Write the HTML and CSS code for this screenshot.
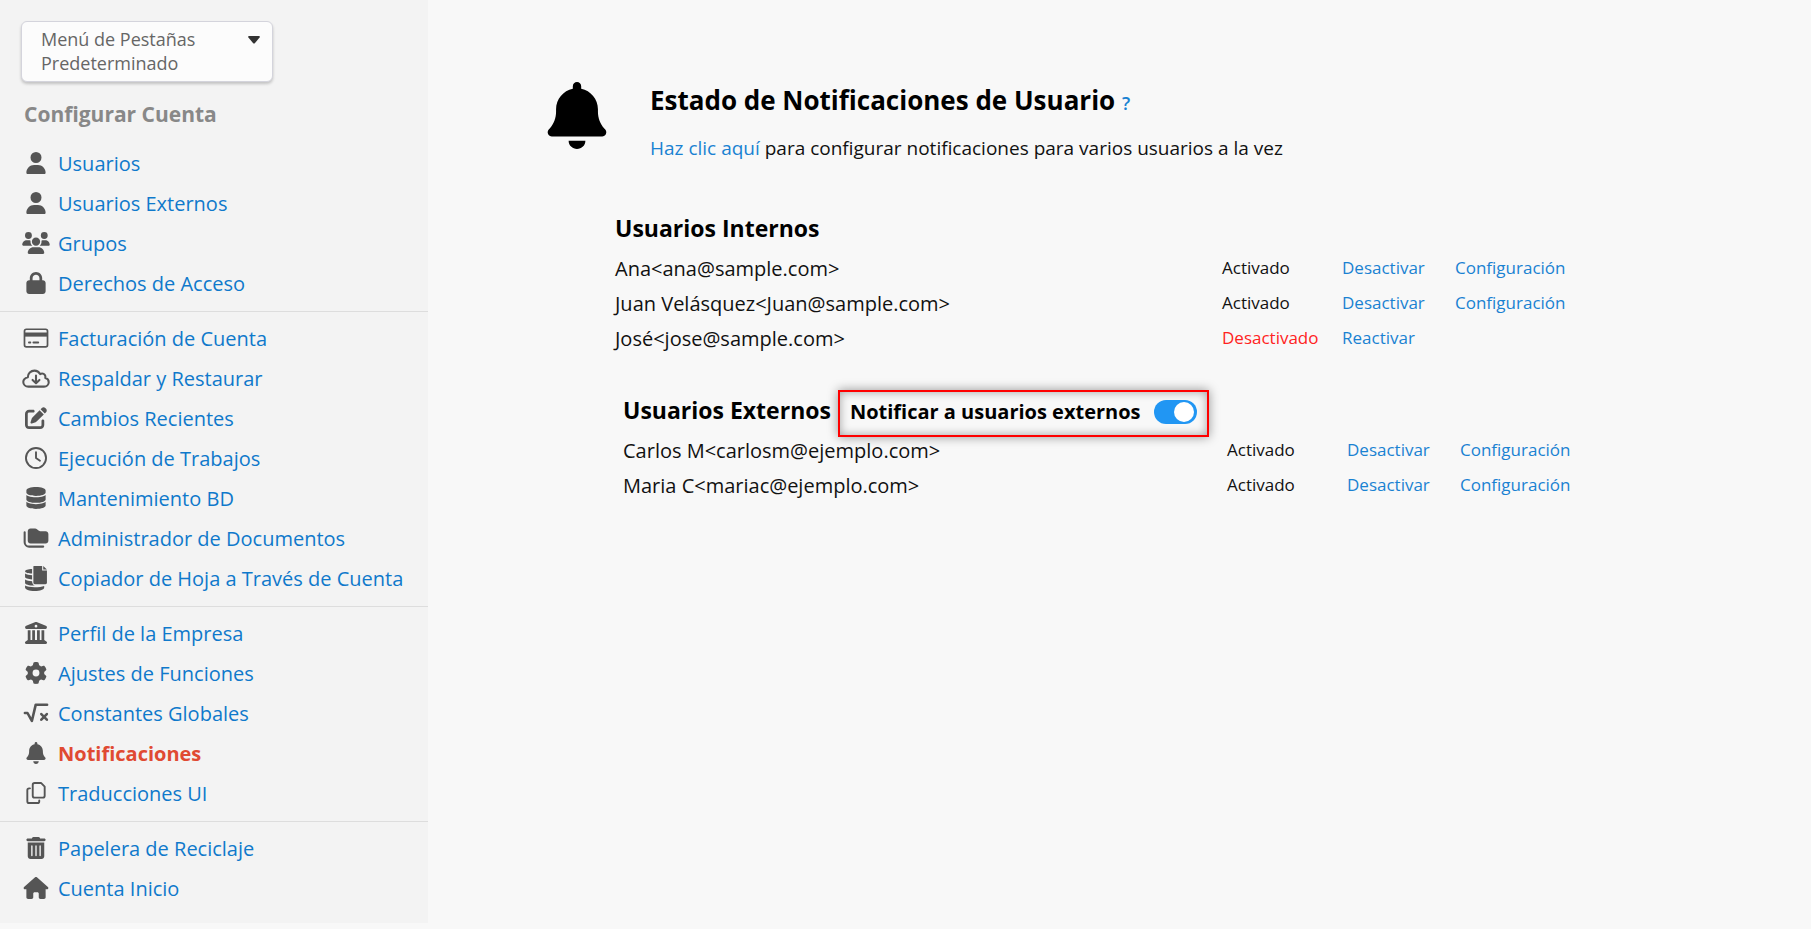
FILE: index.html
```
<!DOCTYPE html>
<html lang="es">
  <head>
    <meta charset="UTF-8" />
    <meta name="viewport" content="width=device-width, initial-scale=1.0" />
    <title>Notificaciones</title>
    <link rel="stylesheet" href="styles.css">
  </head>
  <body>
    <svg class="sprite" aria-hidden="true">
      <symbol id="i-user" viewBox="0 0 448 512"><path d="M224 256A128 128 0 1 0 224 0a128 128 0 1 0 0 256zm-45.700 48C79.800 304 0 383.800 0 482.300C0 498.700 13.300 512 29.700 512H418.300c16.400 0 29.700-13.300 29.700-29.700C448 383.800 368.200 304 269.700 304H178.300z"/></symbol>
      <symbol id="i-groups" viewBox="0 0 640 512"><path d="M144 0a80 80 0 1 1 0 160A80 80 0 1 1 144 0zM512 0a80 80 0 1 1 0 160A80 80 0 1 1 512 0zM0 298.700C0 239.800 47.800 192 106.700 192h42.700c15.900 0 31 3.500 44.600 9.700c-1.300 7.200-1.900 14.700-1.900 22.300c0 38.200 16.800 72.500 43.300 96H21.300C9.600 320 0 310.400 0 298.700zM405.300 320c26.600-23.500 43.300-57.800 43.300-96c0-7.600-.7-15-1.900-22.300c13.600-6.300 28.700-9.700 44.600-9.700h42.700C592.200 192 640 239.800 640 298.700c0 11.800-9.600 21.300-21.300 21.300H405.300zM224 224a96 96 0 1 1 192 0 96 96 0 1 1-192 0zM128 485.300C128 411.700 187.700 352 261.300 352H378.700C452.300 352 512 411.700 512 485.300c0 14.700-11.900 26.700-26.700 26.700H154.700c-14.700 0-26.700-11.900-26.700-26.700z"/></symbol>
      <symbol id="i-lock" viewBox="0 0 448 512"><path d="M144 144v48H304V144c0-44.200-35.800-80-80-80s-80 35.800-80 80zM80 192V144C80 64.500 144.500 0 224 0s144 64.500 144 144v48h16c35.300 0 64 28.700 64 64V448c0 35.300-28.700 64-64 64H64c-35.300 0-64-28.700-64-64V256c0-35.300 28.700-64 64-64H80z"/></symbol>
      <symbol id="i-card" viewBox="0 0 576 512"><rect x="20" y="52" width="536" height="408" rx="44" fill="none" stroke="currentColor" stroke-width="40"/><path d="M20 128h536v96H20z"/><path d="M124 360h32M228 360h112" fill="none" stroke="currentColor" stroke-width="44" stroke-linecap="round"/></symbol>
      <symbol id="i-cloud" viewBox="0 0 640 512"><path d="M144 456h364c62 0 108-44 108-102c0-50-34-90-80-100c14-50-20-102-74-102c-18 0-32 4-46 12c-28-50-76-80-132-80c-86 0-154 68-154 152c-62 16-106 56-106 112c0 62 52 108 120 108z" fill="none" stroke="currentColor" stroke-width="48" stroke-linejoin="round"/><path d="M320 200v172M240 300l80 78 80-78" fill="none" stroke="currentColor" stroke-width="48" stroke-linecap="round" stroke-linejoin="round"/></symbol>
      <symbol id="i-edit" viewBox="0 0 512 512"><path d="M471.600 21.700c-21.900-21.900-57.300-21.900-79.200 0L362.300 51.700l97.900 97.900 30.100-30.100c21.900-21.900 21.900-57.300 0-79.200L471.600 21.700zm-299.200 220c-6.100 6.100-10.800 13.600-13.500 21.900l-29.600 88.800c-2.900 8.600-.6 18.100 5.800 24.600s15.900 8.700 24.600 5.800l88.800-29.600c8.200-2.700 15.700-7.400 21.900-13.500L437.700 172.300 339.700 74.300 172.400 241.700zM96 64C43 64 0 107 0 160V416c0 53 43 96 96 96H352c53 0 96-43 96-96V320c0-17.700-14.300-32-32-32s-32 14.300-32 32v96c0 17.700-14.300 32-32 32H96c-17.700 0-32-14.300-32-32V160c0-17.700 14.300-32 32-32h96c17.700 0 32-14.300 32-32s-14.300-32-32-32H96z"/></symbol>
      <symbol id="i-clock" viewBox="0 0 512 512"><g fill="none" stroke="currentColor" stroke-width="44" stroke-linecap="round" stroke-linejoin="round"><circle cx="256" cy="256" r="234"/><path d="M256 120v136l92 62"/></g></symbol>
      <symbol id="i-database" viewBox="0 0 448 512"><path d="M448 80v48c0 44.200-100.300 80-224 80S0 172.200 0 128V80C0 35.800 100.300 0 224 0S448 35.800 448 80zM393.200 214.700c20.800-7.400 39.900-16.900 54.800-28.600V288c0 44.200-100.300 80-224 80S0 332.200 0 288V186.100c14.900 11.800 34 21.200 54.800 28.600C99.700 230.700 159.500 240 224 240s124.300-9.300 169.200-25.300zM0 346.100c14.900 11.800 34 21.200 54.800 28.600C99.700 390.700 159.500 400 224 400s124.300-9.300 169.200-25.300c20.800-7.400 39.900-16.900 54.800-28.600V432c0 44.200-100.300 80-224 80S0 476.200 0 432V346.100z"/></symbol>
      <symbol id="i-folders" viewBox="0 0 576 512"><path d="M96 96c0-35 29-64 64-64h106c17 0 33 7 45 19l27 26c12 12 28 19 45 19h129c35 0 64 29 64 64v160c0 35-29 64-64 64H160c-35 0-64-29-64-64V96z"/><path d="M24 120v232c0 57 47 104 104 104h328" fill="none" stroke="currentColor" stroke-width="48" stroke-linecap="round"/></symbol>
      <symbol id="i-copier" viewBox="0 0 448 512"><path d="M180 0h170v92h98v250c0 17-13 30-30 30H200c-17 0-30-13-30-30V10c0-6 4-10 10-10zM372 0l76 70h-76zM144 62v92C66 152 0 138 0 108c0-24 60-44 144-46zM0 154c36 24 84 32 144 34v86C60 270 0 252 0 226zM0 276c36 24 84 32 144 34c2 50 26 90 64 90h-16C80 398 0 376 0 346zM0 400c40 26 110 34 196 34s150-8 196-26v30c0 42-84 74-196 74S0 480 0 440z"/></symbol>
      <symbol id="i-bank" viewBox="0 0 512 512"><path d="M243 2c8-3 18-3 26 0l216 88c15 6 25 20 25 37c0 18-14 33-32 33H34c-18 0-32-15-32-33c0-17 10-31 25-37zM256 64a32 32 0 1 0 0 64 32 32 0 1 0 0-64zM64 192h64v224h40V192h64v224h48V192h64v224h40V192h64v228l50 34c12 8 18 22 14 36s-17 22-32 22H32c-15 0-28-8-32-22s2-28 14-36l50-34z" fill-rule="evenodd"/></symbol>
      <symbol id="i-gear" viewBox="0 0 512 512"><path d="M495.900 166.600c3.200 8.700 .5 18.400-6.400 24.600l-43.300 39.400c1.100 8.300 1.700 16.800 1.700 25.400s-.6 17.100-1.700 25.400l43.300 39.400c6.900 6.200 9.600 15.900 6.400 24.600c-4.400 11.900-9.700 23.300-15.800 34.300l-4.700 8.100c-6.600 11-14 21.400-22.100 31.200c-5.900 7.200-15.700 9.600-24.500 6.800l-55.700-17.700c-13.400 10.300-28.200 18.900-44 25.400l-12.500 57.100c-2 9.100-9 16.300-18.200 17.800c-13.800 2.300-28 3.500-42.500 3.500s-28.700-1.200-42.500-3.500c-9.200-1.500-16.200-8.700-18.200-17.800l-12.500-57.100c-15.800-6.500-30.600-15.100-44-25.400L83.100 425.900c-8.800 2.800-18.600 .3-24.500-6.800c-8.100-9.800-15.500-20.200-22.100-31.200l-4.700-8.100c-6.100-11-11.400-22.400-15.800-34.300c-3.200-8.700-.5-18.400 6.400-24.600l43.300-39.400C64.600 273.100 64 264.600 64 256s.6-17.100 1.700-25.400L22.400 191.200c-6.900-6.200-9.600-15.900-6.400-24.600c4.400-11.900 9.700-23.300 15.800-34.300l4.700-8.100c6.600-11 14-21.400 22.100-31.200c5.900-7.200 15.700-9.600 24.500-6.800l55.700 17.700c13.400-10.300 28.200-18.900 44-25.400l12.500-57.100c2-9.100 9-16.300 18.200-17.800C227.300 1.200 241.500 0 256 0s28.700 1.200 42.500 3.500c9.200 1.500 16.200 8.700 18.200 17.800l12.500 57.100c15.800 6.500 30.600 15.100 44 25.400l55.700-17.700c8.800-2.800 18.600-.3 24.500 6.800c8.100 9.800 15.500 20.200 22.100 31.200l4.700 8.100c6.100 11 11.400 22.400 15.800 34.300zM256 336a80 80 0 1 0 0-160 80 80 0 1 0 0 160z"/></symbol>
      <symbol id="i-root" viewBox="0 0 576 512"><g fill="none" stroke="currentColor" stroke-width="60" stroke-linecap="round" stroke-linejoin="round"><path d="M30 256h60l102 186L282 62h264"/><path d="M412 280l128 132M540 280L412 412"/></g></symbol>
      <symbol id="i-bell" viewBox="0 0 448 512"><path d="M224 0c-17.700 0-32 14.300-32 32V51.200C119 66 64 130.600 64 208v18.800c0 47-17.300 92.400-48.500 127.600l-7.400 8.300c-8.400 9.400-10.400 22.900-5.300 34.400S19.400 416 32 416H416c12.600 0 24-7.400 29.200-18.900s3.100-25-5.300-34.400l-7.400-8.300C401.300 319.200 384 273.900 384 226.800V208c0-77.400-55-142-128-156.800V32c0-17.700-14.300-32-32-32zm45.300 493.300c12-12 18.700-28.300 18.700-45.300H160c0 17 6.700 33.300 18.700 45.300s28.300 18.700 45.300 18.700s33.300-6.700 45.300-18.700z"/></symbol>
      <symbol id="i-copy" viewBox="0 0 448 512"><g fill="none" stroke="currentColor" stroke-width="44" stroke-linecap="round" stroke-linejoin="round"><path d="M192 22h148l86 86v212c0 24-20 44-44 44H192c-24 0-44-20-44-44V66c0-24 20-44 44-44z"/><path d="M84 148H66c-24 0-44 20-44 44v254c0 24 20 44 44 44h190c24 0 44-20 44-44v-16"/></g></symbol>
      <symbol id="i-trash" viewBox="0 0 448 512"><path d="M135.200 17.700C140.600 6.800 151.700 0 163.800 0H284.200c12.100 0 23.200 6.800 28.600 17.700L320 32h96c17.700 0 32 14.300 32 32s-14.300 32-32 32H32C14.300 96 0 81.700 0 64S14.300 32 32 32h96l7.200-14.300zM32 128H416V448c0 35.300-28.700 64-64 64H96c-35.300 0-64-28.700-64-64V128zm96 64c-8.800 0-16 7.200-16 16V432c0 8.800 7.200 16 16 16s16-7.200 16-16V208c0-8.800-7.200-16-16-16zm96 0c-8.800 0-16 7.200-16 16V432c0 8.800 7.200 16 16 16s16-7.200 16-16V208c0-8.800-7.200-16-16-16zm96 0c-8.800 0-16 7.200-16 16V432c0 8.800 7.200 16 16 16s16-7.200 16-16V208c0-8.800-7.200-16-16-16z"/></symbol>
      <symbol id="i-home" viewBox="0 0 576 512"><path d="M575.800 255.500c0 18-15 32.100-32 32.100h-32l.7 160.200c0 2.700-.2 5.400-.5 8.100V472c0 22.100-17.900 40-40 40H392c-22.100 0-40-17.900-40-40V384c0-17.700-14.300-32-32-32H256c-17.700 0-32 14.300-32 32v88c0 22.100-17.900 40-40 40H104c-22.100 0-40-17.900-40-40V287.600H32c-18 0-32-14-32-32.100c0-9 3-17 10-24L266.400 8c7-7 15-8 22-8s15 2 21 7L564.800 231.500c8 7 12 15 11 24z"/></symbol>
    </svg>

    <div class="layout">
      <aside class="sidebar">
        <button class="tab-menu" type="button">
          <span>Menú de Pestañas Predeterminado</span>
          <svg class="caret" viewBox="0 0 12 8"><path d="M1 0h10c1 0 1 1 .6 1.500L6.800 7.200c-.5.500-1.100.5-1.600 0L.4 1.500C0 1 0 0 1 0z"/></svg>
        </button>
        <h2 class="sidebar-title">Configurar Cuenta</h2>

        <nav>
          <ul class="nav-group">
            <li><a href="#"><svg class="icon"><use href="#i-user"/></svg>Usuarios</a></li>
            <li><a href="#"><svg class="icon"><use href="#i-user"/></svg>Usuarios Externos</a></li>
            <li><a href="#"><svg class="icon"><use href="#i-groups"/></svg>Grupos</a></li>
            <li><a href="#"><svg class="icon"><use href="#i-lock"/></svg>Derechos de Acceso</a></li>
          </ul>
          <ul class="nav-group">
            <li><a href="#"><svg class="icon"><use href="#i-card"/></svg>Facturación de Cuenta</a></li>
            <li><a href="#"><svg class="icon"><use href="#i-cloud"/></svg>Respaldar y Restaurar</a></li>
            <li><a href="#"><svg class="icon"><use href="#i-edit"/></svg>Cambios Recientes</a></li>
            <li><a href="#"><svg class="icon"><use href="#i-clock"/></svg>Ejecución de Trabajos</a></li>
            <li><a href="#"><svg class="icon"><use href="#i-database"/></svg>Mantenimiento BD</a></li>
            <li><a href="#"><svg class="icon"><use href="#i-folders"/></svg>Administrador de Documentos</a></li>
            <li><a href="#"><svg class="icon tall"><use href="#i-copier"/></svg>Copiador de Hoja a Través de Cuenta</a></li>
          </ul>
          <ul class="nav-group">
            <li><a href="#"><svg class="icon"><use href="#i-bank"/></svg>Perfil de la Empresa</a></li>
            <li><a href="#"><svg class="icon"><use href="#i-gear"/></svg>Ajustes de Funciones</a></li>
            <li><a href="#"><svg class="icon"><use href="#i-root"/></svg>Constantes Globales</a></li>
            <li><a href="#" class="active"><svg class="icon"><use href="#i-bell"/></svg>Notificaciones</a></li>
            <li><a href="#"><svg class="icon"><use href="#i-copy"/></svg>Traducciones UI</a></li>
          </ul>
          <ul class="nav-group">
            <li><a href="#"><svg class="icon"><use href="#i-trash"/></svg>Papelera de Reciclaje</a></li>
            <li><a href="#"><svg class="icon"><use href="#i-home"/></svg>Cuenta Inicio</a></li>
          </ul>
        </nav>
      </aside>

      <main class="content">
        <header class="page-header">
          <svg class="page-icon"><use href="#i-bell"/></svg>
          <div>
            <h1>Estado de Notificaciones de Usuario <a href="#" class="help">?</a></h1>
            <p><a href="#">Haz clic aquí</a> para configurar notificaciones para varios usuarios a la vez</p>
          </div>
        </header>

        <section class="users">
          <div class="users-header">
            <h2>Usuarios Internos</h2>
          </div>
          <table>
            <tr>
              <td class="name">Ana&lt;ana@sample.com&gt;</td>
              <td class="status">Activado</td>
              <td class="toggle-link"><a href="#">Desactivar</a></td>
              <td class="config"><a href="#">Configuración</a></td>
            </tr>
            <tr>
              <td class="name">Juan Velásquez&lt;Juan@sample.com&gt;</td>
              <td class="status">Activado</td>
              <td class="toggle-link"><a href="#">Desactivar</a></td>
              <td class="config"><a href="#">Configuración</a></td>
            </tr>
            <tr>
              <td class="name">José&lt;jose@sample.com&gt;</td>
              <td class="status off">Desactivado</td>
              <td class="toggle-link"><a href="#">Reactivar</a></td>
              <td class="config"></td>
            </tr>
          </table>
        </section>

        <section class="users external">
          <div class="users-header">
            <h2>Usuarios Externos</h2>
            <label class="notify">
              Notificar a usuarios externos
              <input type="checkbox" class="switch" checked>
            </label>
          </div>
          <table>
            <tr>
              <td class="name">Carlos M&lt;carlosm@ejemplo.com&gt;</td>
              <td class="status">Activado</td>
              <td class="toggle-link"><a href="#">Desactivar</a></td>
              <td class="config"><a href="#">Configuración</a></td>
            </tr>
            <tr>
              <td class="name">Maria C&lt;mariac@ejemplo.com&gt;</td>
              <td class="status">Activado</td>
              <td class="toggle-link"><a href="#">Desactivar</a></td>
              <td class="config"><a href="#">Configuración</a></td>
            </tr>
          </table>
        </section>
      </main>
    </div>
  </body>
</html>
```
FILE: styles.css
```
* {
  box-sizing: border-box;
}

body {
  margin: 0;
  font-family: "Open Sans", sans-serif;
  font-size: 20px;
  color: #111;
  background-color: #f8f8f8;
}

a {
  color: #1a82d2;
  text-decoration: none;
}

a:hover {
  text-decoration: underline;
}

h1,
h2,
p {
  margin: 0;
}

.sprite {
  display: none;
}

.layout {
  display: flex;
  align-items: flex-start;
}

/* Sidebar */
.sidebar {
  flex: 0 0 428px;
  padding: 21px 0 7px;
  background-color: #f3f3f3;
}

.tab-menu {
  display: flex;
  align-items: flex-start;
  justify-content: space-between;
  width: 252px;
  margin-left: 21px;
  padding: 5px 12px 6px 19px;
  border: 1px solid #d4d4dc;
  border-radius: 6px;
  background-color: #fcfcfc;
  box-shadow: 0 2px 3px rgba(0, 0, 0, 0.2);
  font-family: inherit;
  font-size: 18px;
  line-height: 24px;
  color: #666;
  text-align: left;
  cursor: pointer;
}

.tab-menu span {
  width: 170px;
}

.caret {
  width: 12px;
  height: 8px;
  margin-top: 9px;
  fill: #333;
}

.sidebar-title {
  margin: 16px 0 7px;
  padding-left: 24px;
  font-size: 21px;
  line-height: 32px;
  color: #888;
}

.nav-group {
  margin: 0;
  padding: 6px 0 8px 22px;
  list-style: none;
}

.nav-group + .nav-group {
  border-top: 1px solid #ddd;
}

.nav-group a {
  display: flex;
  align-items: center;
  gap: 8px;
  height: 40px;
  color: #0f79cb;
  white-space: nowrap;
}

.nav-group a.active {
  font-weight: 700;
  color: #e04a32;
}

.icon {
  flex: none;
  width: 28px;
  height: 22px;
  color: #555;
  fill: currentColor;
}

.icon.tall {
  height: 25px;
}

/* Content */
.content {
  flex: 1;
  padding: 79px 230px 0 119px;
}

.page-header {
  display: flex;
  gap: 43px;
}

.page-icon {
  flex: none;
  width: 60px;
  height: 67px;
  margin-top: 3px;
}

h1 {
  font-size: 26px;
  font-weight: 700;
  line-height: 42px;
  color: #000;
}

.help {
  font-size: 18px;
  font-weight: 600;
  line-height: 1;
}

.page-header p {
  margin-top: 13px;
  font-size: 19px;
  line-height: 28px;
}

.users {
  margin: 46px 0 0 68px;
}

.users.external {
  margin: 34px -5px 0 76px;
}

.users-header {
  display: flex;
  align-items: flex-start;
  gap: 7px;
  height: 43px;
}

.users h2 {
  font-size: 23px;
  line-height: 40px;
  color: #000;
}

.notify {
  display: flex;
  align-items: center;
  gap: 13px;
  height: 47px;
  padding: 0 10px 4px;
  border: 2px solid #f00;
  box-shadow: 0 0 10px rgba(0, 0, 0, 0.4), inset 0 0 10px rgba(0, 0, 0, 0.35);
  font-weight: 700;
  color: #000;
}

.switch {
  display: flex;
  align-items: center;
  justify-content: flex-end;
  width: 43px;
  height: 24px;
  margin: 0;
  padding: 0 3px;
  border-radius: 12px;
  background-color: #2196f3;
  appearance: none;
  cursor: pointer;
}

.switch::before {
  content: "";
  width: 20px;
  height: 20px;
  border-radius: 50%;
  background-color: #fff;
}

.switch:not(:checked) {
  justify-content: flex-start;
  background-color: #ccc;
}

table {
  width: 100%;
  border-collapse: collapse;
}

td {
  height: 35px;
  padding: 0 0 3px;
  font-size: 17px;
}

.name {
  padding: 0;
  font-size: 20px;
}

.status {
  width: 120px;
}

.status.off {
  color: #f22;
}

.toggle-link {
  width: 113px;
}

.config {
  width: 126px;
}
```
